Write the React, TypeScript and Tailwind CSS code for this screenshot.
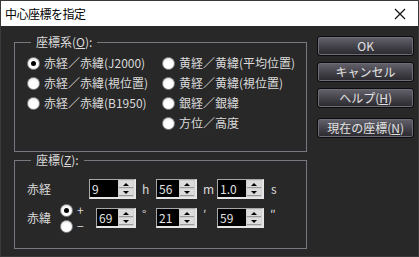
import React from 'react';

const font = { fontFamily: '"Noto Sans CJK JP", "Noto Sans", sans-serif' };

const Radio = ({ checked = false }: { checked?: boolean }) => (
  <span className="w-[13px] h-[13px] rounded-full border border-[#8a8a8a] bg-[radial-gradient(circle_at_50%_60%,#ffffff_45%,#d8d8d8)] flex items-center justify-center shrink-0">
    {checked && <span className="w-[5px] h-[5px] rounded-full bg-black" />}
  </span>
);

const Option = ({ label, checked }: { label: string; checked?: boolean }) => (
  <div className="h-[20px] flex items-center gap-[4px]">
    <Radio checked={checked} />
    <span className="leading-none">{label}</span>
  </div>
);

const Spin = ({ value, width }: { value: string; width: string }) => (
  <div className={`${width} h-[20px] flex border border-[#a8a8a8] border-b-2 border-b-[#e6e6e6] border-r-2 border-r-[#e6e6e6]`}>
    <div className="flex-1 bg-black text-[#e4e4e4] pl-[2px] leading-[18px] text-[12px]">{value}</div>
    <div className="w-[16px] flex flex-col bg-[#cfcfcf] gap-[1px] p-[1px]">
      <div className="flex-1 bg-[#dcdcdc] border-b border-[#9a9a9a] flex items-center justify-center">
        <span className="w-0 h-0 border-l-[3px] border-r-[3px] border-b-[3px] border-l-transparent border-r-transparent border-b-black" />
      </div>
      <div className="flex-1 bg-[#dcdcdc] border-b border-[#9a9a9a] flex items-center justify-center">
        <span className="w-0 h-0 border-l-[3px] border-r-[3px] border-t-[3px] border-l-transparent border-r-transparent border-t-black" />
      </div>
    </div>
  </div>
);

const Button = ({ children }: { children: React.ReactNode }) => (
  <button className="h-[20px] w-full rounded-[3px] border border-[#0c0c0e] bg-gradient-to-b from-[#65636d] via-[#45434b] to-[#2a292e] shadow-[inset_0_0_0_1px_#6e6c76] text-[#e2e2e2] text-[12px] leading-none">
    {children}
  </button>
);

export default function App() {
  return (
    <div style={font} className="w-[419px] h-[257px] bg-[#282828] border border-[#3a3a3a] flex flex-col text-[12px] text-[#dadada]">
      {/* Title bar */}
      <div className="h-[25px] bg-white flex items-center justify-between pl-[4px] pr-[12px] shrink-0">
        <span className="text-black text-[12px] tracking-[-0.5px]">中心座標を指定</span>
        <svg width="12" height="12" viewBox="0 0 12 12">
          <path d="M1 1L11 11M11 1L1 11" stroke="#111" strokeWidth="1.2" />
        </svg>
      </div>

      <div className="flex flex-1 pl-[13px] pr-[4px] pt-[9px] gap-[10px]">
        <div className="w-[294px] flex flex-col gap-[1px]">
          <fieldset className="h-[117px] border border-[#787880] pl-[12px] pt-[4px]">
            <legend className="px-[5px] ml-[4px] leading-[14px]">
              座標系(<span className="underline">O</span>):
            </legend>
            <div className="flex">
              <div className="w-[135px] flex flex-col">
                <Option label="赤経／赤緯(J2000)" checked />
                <Option label="赤経／赤緯(視位置)" />
                <Option label="赤経／赤緯(B1950)" />
              </div>
              <div className="flex flex-col">
                <Option label="黄経／黄緯(平均位置)" />
                <Option label="黄経／黄緯(視位置)" />
                <Option label="銀経／銀緯" />
                <Option label="方位／高度" />
              </div>
            </div>
          </fieldset>

          <fieldset className="h-[96px] border border-[#787880] pl-[12px] pt-[12px]">
            <legend className="px-[5px] ml-[4px] leading-[14px]">
              座標(<span className="underline">Z</span>):
            </legend>
            <div className="flex items-center h-[20px]">
              <span className="w-[62px]">赤経</span>
              <Spin value="9" width="w-[47px]" />
              <span className="w-[20px] pl-[6px]">h</span>
              <Spin value="56" width="w-[41px]" />
              <span className="w-[20px] pl-[6px]">m</span>
              <Spin value="1.0" width="w-[47px]" />
              <span className="pl-[7px]">s</span>
            </div>
            <div className="flex items-center h-[30px] mt-[4px]">
              <span className="w-[33px]">赤緯</span>
              <div className="w-[36px] flex flex-col gap-[3px]">
                <div className="flex items-center gap-[4px] leading-none"><Radio checked /><span>+</span></div>
                <div className="flex items-center gap-[4px] leading-none"><Radio /><span>−</span></div>
              </div>
              <div className="flex items-start h-[20px]">
                <Spin value="69" width="w-[40px]" />
                <span className="w-[20px] pl-[6px] -mt-[3px]">°</span>
                <Spin value="21" width="w-[41px]" />
                <span className="w-[20px] pl-[6px] -mt-[3px]">′</span>
                <Spin value="59" width="w-[47px]" />
                <span className="pl-[6px] -mt-[3px]">″</span>
              </div>
            </div>
          </fieldset>
        </div>

        <div className="w-[97px] flex flex-col pt-[1px]">
          <Button>OK</Button>
          <div className="h-[6px]" />
          <Button>キャンセル</Button>
          <div className="h-[6px]" />
          <Button>ヘルプ(<span className="underline">H</span>)</Button>
          <div className="h-[10px]" />
          <Button>現在の座標(<span className="underline">N</span>)</Button>
        </div>
      </div>
    </div>
  );
}
